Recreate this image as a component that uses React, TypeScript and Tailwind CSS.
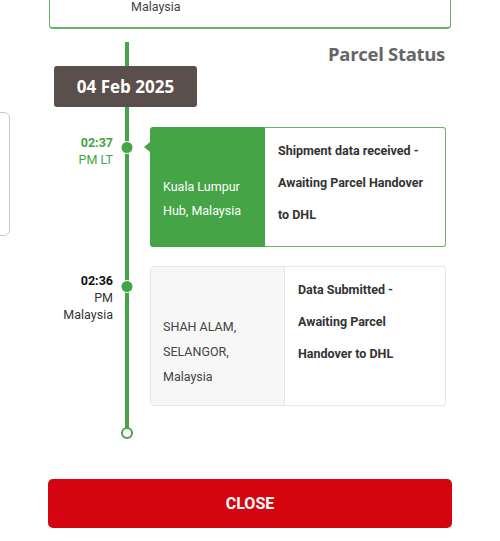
import React from "react";

function Dot() {
  return (
    <div className="absolute left-1/2 top-[14px] -translate-x-1/2 w-[13px] h-[13px] rounded-full bg-white flex items-center justify-center">
      <div className="w-[11px] h-[11px] rounded-full bg-[#45a446]" />
    </div>
  );
}

export default function App() {
  return (
    <div className="relative w-[500px] h-[541px] overflow-hidden bg-white font-['Roboto',sans-serif]">
      {/* background element peeking at left */}
      <div className="absolute left-[-40px] top-[112px] w-[50px] h-[124px] rounded-[6px] border border-[#c8c8c8] bg-white" />

      <div className="relative px-[48px]">
        {/* top card (bottom part visible) */}
        <div className="mx-px h-[29px] border-x border-b-2 border-[#63b463] rounded-b-[4px] pl-[81px] flex items-start">
          <span className="text-[12.5px] leading-[13px] text-[#444]">Malaysia</span>
        </div>

        <div className="relative">
          {/* vertical timeline line */}
          <div className="absolute left-[77px] top-[13px] w-[4px] h-[386px] bg-[#45a446]" />
          {/* end hollow circle */}
          <div className="absolute left-[73px] top-[398px] w-[12px] h-[12px] rounded-full border-[2.5px] border-[#45a446] bg-white" />

          <div className="flex justify-end pt-[13px] pr-[7px]">
            <span className="font-['Open_Sans',sans-serif] font-bold text-[18.5px] leading-[24px] tracking-[-0.3px] text-[#666]">
              Parcel Status
            </span>
          </div>

          <div className="pl-[6px]">
            <div className="relative inline-flex items-center justify-center w-[143px] h-[41px] rounded-[3px] bg-[#5a4f4c] text-white font-['Open_Sans',sans-serif] font-bold text-[17px]">
              04 Feb 2025
            </div>
          </div>

          {/* row 1 */}
          <div className="flex mt-[20px]">
            <div className="w-[65px] pt-[7px] text-right text-[12.5px] leading-[17px] text-[#45a446]">
              <div className="font-bold">02:37</div>
              <div>PM LT</div>
            </div>
            <div className="relative w-[28px]">
              <Dot />
            </div>
            <div className="relative ml-[9px] w-[296px] h-[120px] flex">
              <div className="absolute left-[-6px] top-[15px] w-0 h-0 border-y-[5px] border-y-transparent border-r-[6px] border-r-[#45a446]" />
              <div className="w-[115px] bg-[#45a446] rounded-l-[3px] pl-[13px] pt-[48px] text-[12.5px] leading-[24px] text-white">
                <div>Kuala Lumpur</div>
                <div>Hub, Malaysia</div>
              </div>
              <div className="flex-1 border border-l-0 border-[#63b463] rounded-r-[3px] pl-[13px] pt-[7px] text-[12.5px] leading-[32px] font-bold text-[#333]">
                <div>Shipment data received -</div>
                <div>Awaiting Parcel Handover</div>
                <div>to DHL</div>
              </div>
            </div>
          </div>

          {/* row 2 */}
          <div className="flex mt-[19px]">
            <div className="w-[65px] pt-[6px] text-right text-[12.5px] leading-[17px] text-[#333]">
              <div className="font-bold text-[#111]">02:36</div>
              <div>PM</div>
              <div>Malaysia</div>
            </div>
            <div className="relative w-[28px]">
              <Dot />
            </div>
            <div className="ml-[9px] w-[296px] h-[140px] flex border border-[#e6e6e6] rounded-[3px]">
              <div className="w-[134px] bg-[#f7f7f7] border-r border-[#e6e6e6] pl-[12px] pt-[47px] text-[12.5px] leading-[25px] text-[#444]">
                <div>SHAH ALAM,</div>
                <div>SELANGOR,</div>
                <div>Malaysia</div>
              </div>
              <div className="flex-1 pl-[13px] pt-[7px] text-[12.5px] leading-[32px] font-bold text-[#333]">
                <div>Data Submitted -</div>
                <div>Awaiting Parcel</div>
                <div>Handover to DHL</div>
              </div>
            </div>
          </div>
        </div>

        <button className="mt-[73px] w-full h-[49px] rounded-[5px] bg-[#d40511] text-white font-bold text-[16px] flex items-center justify-center">
          CLOSE
        </button>
      </div>
    </div>
  );
}
